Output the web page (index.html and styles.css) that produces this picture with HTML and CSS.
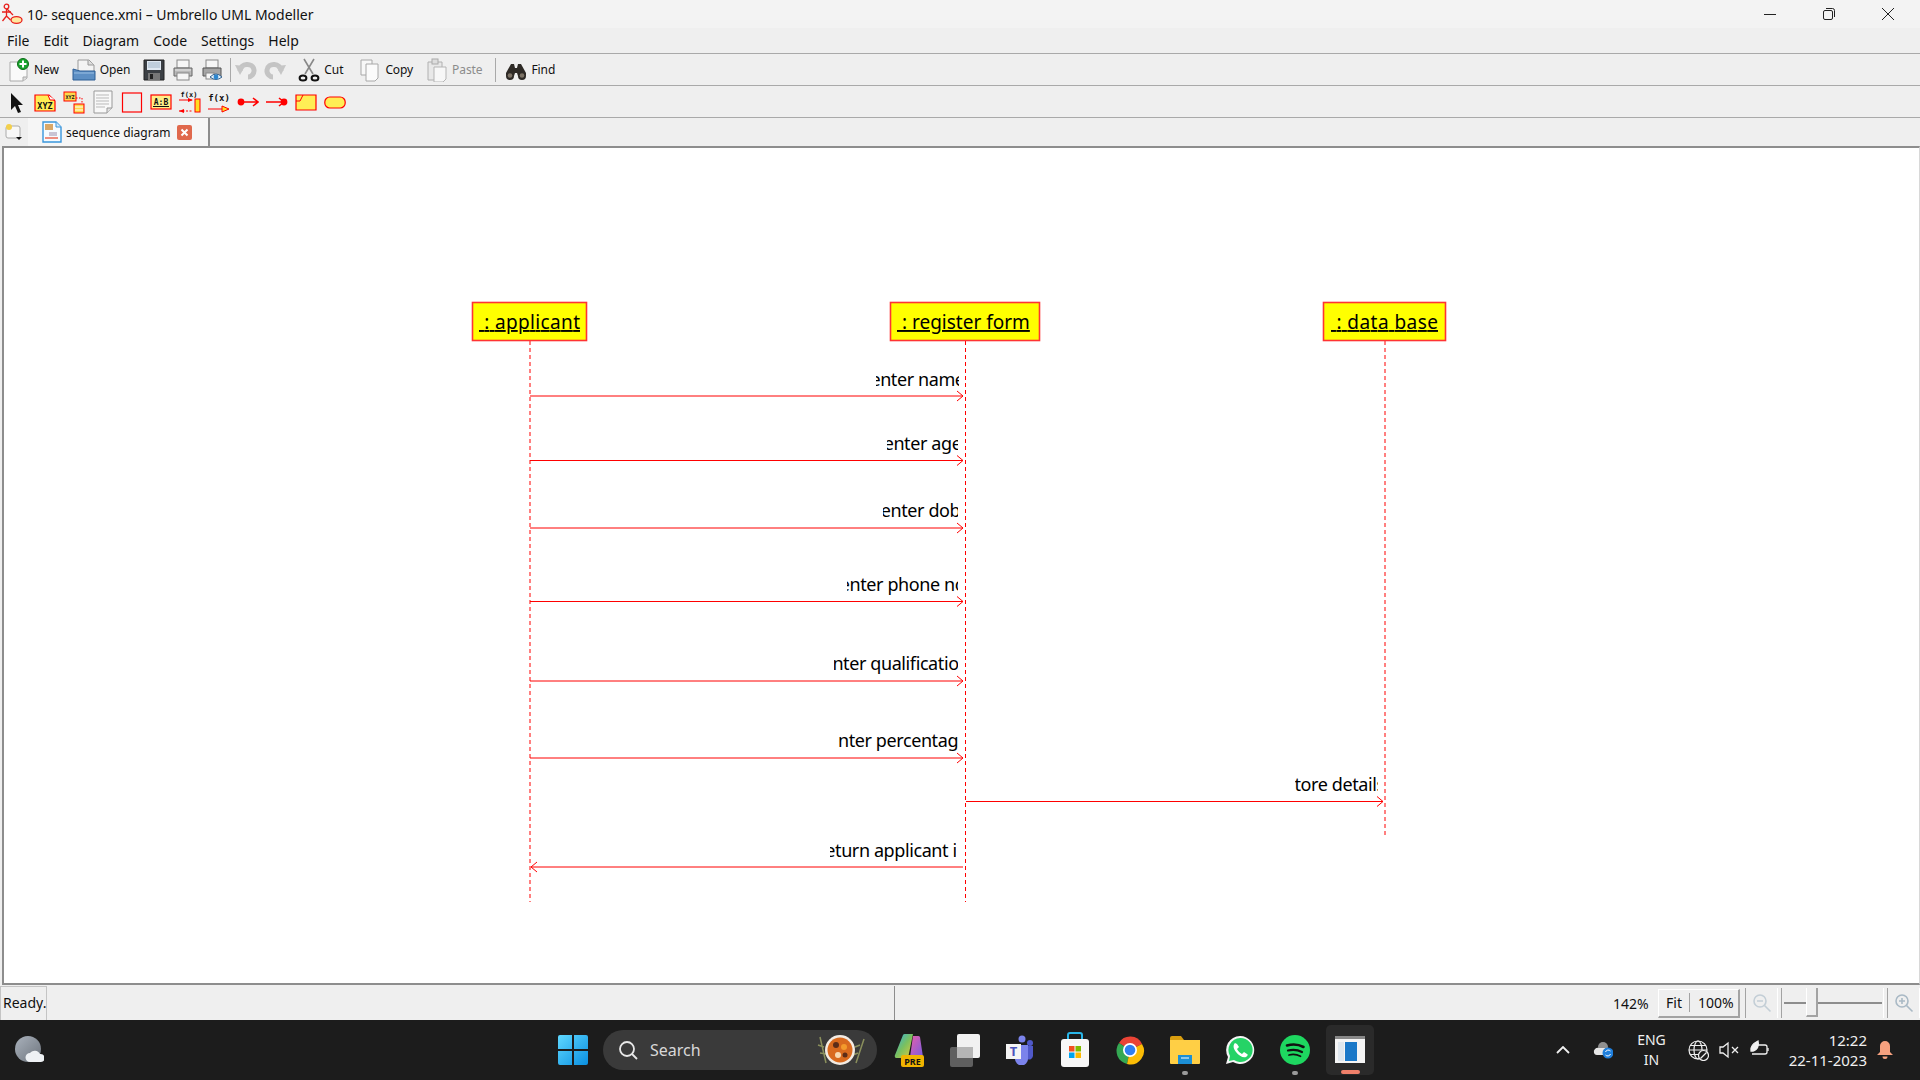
FILE: index.html
```html
<!DOCTYPE html>
<html lang="en">
<head>
  <meta charset="UTF-8" />
  <title>10- sequence.xmi – Umbrello UML Modeller</title>
  <link rel="stylesheet" href="styles.css">
</head>
<body>
  <header class="titlebar">
    <svg class="app-icon" width="22" height="22" viewBox="0 0 22 22" fill="none" stroke="#e8211d" stroke-width="1.3">
      <circle cx="5.5" cy="3.5" r="2.3"/><path d="M5.5 6v7M1 9h9M5.5 13l-4 5M5.5 13l4 4"/>
      <path d="M6 6l6 6"/><ellipse cx="15.5" cy="17" rx="5.5" ry="3.3" fill="#ffe9a0"/>
    </svg>
    <span class="app-title">10- sequence.xmi – Umbrello UML Modeller</span>
    <div class="win-buttons">
      <svg width="14" height="14" viewBox="0 0 14 14" stroke="#222" fill="none"><path d="M1 7.5h12"/></svg>
      <svg width="14" height="14" viewBox="0 0 14 14" stroke="#222" fill="none"><rect x="1.5" y="3.5" width="9" height="9" rx="1.5"/><path d="M4 1.5h6.5a2 2 0 0 1 2 2V10"/></svg>
      <svg width="14" height="14" viewBox="0 0 14 14" stroke="#222" fill="none"><path d="M1 1l12 12M13 1L1 13"/></svg>
    </div>
  </header>

  <nav class="menubar">
    <span>File</span><span>Edit</span><span>Diagram</span><span>Code</span><span>Settings</span><span>Help</span>
  </nav>

  <div class="toolbar">
    <div class="tool tool-text">
      <svg width="22" height="24" viewBox="0 0 22 24"><path d="M2 4h12l5 5v11l-4 3H2z" fill="#fafafa" stroke="#aaa"/><path d="M15 23v-4h4" fill="#ddd" stroke="#aaa"/><circle cx="15" cy="6" r="5.5" fill="#18a32c" stroke="#0c6d18"/><path d="M15 2.5v7M11.5 6h7" stroke="#fff" stroke-width="2"/></svg>
      <span>New</span>
    </div>
    <div class="tool tool-text">
      <svg width="24" height="24" viewBox="0 0 24 24"><path d="M6 2h11l5 5v8H6z" fill="#f4f4f4" stroke="#999"/><path d="M16 2v5h6" fill="#ddd" stroke="#999"/><path d="M1 11l7 2h15v9H1z" fill="#5d8fc4" stroke="#2f5f95"/><path d="M2 15h20" stroke="#9cc0e4"/></svg>
      <span>Open</span>
    </div>
    <div class="tool">
      <svg width="22" height="24" viewBox="0 0 22 24"><path d="M1 2h20v20H1z" fill="#3b3f44" stroke="#222"/><rect x="4" y="3" width="14" height="9" fill="#dfe8f2"/><path d="M5 5h12M5 7h12M5 9h12" stroke="#9fb4c8"/><rect x="5" y="15" width="12" height="7" fill="#777"/><rect x="7" y="16" width="3" height="5" fill="#222"/></svg>
    </div>
    <div class="tool">
      <svg width="22" height="24" viewBox="0 0 22 24"><rect x="5" y="2" width="12" height="8" fill="#f6f6f6" stroke="#888"/><path d="M2 10h18v8H2z" fill="#b9b9b9" stroke="#666"/><rect x="5" y="15" width="12" height="7" fill="#f6f6f6" stroke="#888"/><path d="M3 12h16" stroke="#e8e8e8"/></svg>
    </div>
    <div class="tool">
      <svg width="22" height="24" viewBox="0 0 22 24"><rect x="5" y="2" width="12" height="8" fill="#f6f6f6" stroke="#888"/><path d="M2 10h18v8H2z" fill="#a5a5a5" stroke="#555"/><rect x="5" y="15" width="8" height="6" fill="#f6f6f6" stroke="#888"/><path d="M9 19q6-6 12 0q-6 5-12 0z" fill="#dff0fb" stroke="#33618f"/><circle cx="15" cy="19" r="2.4" fill="#2c86cf"/></svg>
    </div>
    <div class="tool-sep"></div>
    <div class="tool">
      <svg width="22" height="24" viewBox="0 0 22 24" fill="none"><path d="M5 13C5 5 18 4 19 12c.5 4-3 7-6 7" stroke="#c4c4c4" stroke-width="5"/><path d="M0 7l10 1-5 9z" fill="#c6c6c6"/></svg>
    </div>
    <div class="tool">
      <svg width="22" height="24" viewBox="0 0 22 24" fill="none"><path d="M17 13C17 5 4 4 3 12c-.5 4 3 7 6 7" stroke="#c4c4c4" stroke-width="5"/><path d="M22 7l-10 1 5 9z" fill="#c6c6c6"/></svg>
    </div>
    <div class="tool tool-text tool-cut">
      <svg width="22" height="24" viewBox="0 0 22 24" fill="none"><path d="M6 1l9 15M16 1L7 16" stroke="#888" stroke-width="1.6"/><ellipse cx="5" cy="20" rx="3.4" ry="2.6" stroke="#111" stroke-width="2"/><ellipse cx="17" cy="20" rx="3.4" ry="2.6" stroke="#111" stroke-width="2"/></svg>
      <span>Cut</span>
    </div>
    <div class="tool tool-text">
      <svg width="22" height="24" viewBox="0 0 22 24"><path d="M2 2h11v15H2z" fill="#f8f8f8" stroke="#a8a8a8"/><path d="M7 6h12v14l-3 3H7z" fill="#fbfbfb" stroke="#a8a8a8"/></svg>
      <span>Copy</span>
    </div>
    <div class="tool tool-text tool-off">
      <svg width="22" height="24" viewBox="0 0 22 24"><path d="M2 4h14v18H2z" fill="#e8e8e8" stroke="#b0b0b0"/><rect x="6" y="1" width="6" height="5" fill="#ddd" stroke="#aaa"/><path d="M8 9h12v12l-3 3H8z" fill="#f7f7f7" stroke="#b5b5b5"/></svg>
      <span>Paste</span>
    </div>
    <div class="tool-sep tool-sep-find"></div>
    <div class="tool tool-text">
      <svg width="22" height="24" viewBox="0 0 22 24"><path d="M6 6h3l1 4h2l1-4h3l5 9v3a4 4 0 0 1-8 0l-1-3h-2l-1 3a4 4 0 0 1-8 0v-3z" fill="#2e2a26"/><circle cx="5" cy="17.5" r="2.3" fill="#7d7366"/><circle cx="17" cy="17.5" r="2.3" fill="#7d7366"/></svg>
      <span>Find</span>
    </div>
  </div>

  <div class="toolbar toolbar-uml">
    <div class="tool">
      <svg width="22" height="24" viewBox="0 0 22 24"><path d="M6 3v17l4-4 3 7 3-1-3-7h5z" fill="#111"/></svg>
    </div>
    <div class="tool">
      <svg width="22" height="24" viewBox="0 0 22 24"><path d="M1 5h14l6 6v10H1z" fill="#ffee55" stroke="#f00" stroke-width="1.2"/><path d="M14 5l2 5h5" fill="#fff" stroke="#f00"/><text class="icon-text" x="11" y="19" font-size="8.5" text-anchor="middle">XYZ</text></svg>
    </div>
    <div class="tool">
      <svg width="22" height="24" viewBox="0 0 22 24"><rect x="1" y="2" width="12" height="9" fill="#fdd84d" stroke="#f00"/><text class="icon-text" x="7" y="9" font-size="5" text-anchor="middle">XYZ</text><path d="M13 8h6v6" fill="none" stroke="#f00" stroke-dasharray="1.5 1.5"/><rect x="11" y="14" width="10" height="9" fill="#fdd84d" stroke="#f00"/><path d="M12 17h8M12 20h8" stroke="#fff"/></svg>
    </div>
    <div class="tool">
      <svg width="22" height="24" viewBox="0 0 22 24"><path d="M2 1h18v17l-5 5H2z" fill="#f8f8f8" stroke="#999"/><path d="M4 5h13M4 8h13M4 11h13M4 14h13M4 17h9" stroke="#b9b9b9"/><path d="M15 23v-5h5" fill="#e0e0e0" stroke="#999"/></svg>
    </div>
    <div class="tool">
      <svg width="22" height="24" viewBox="0 0 22 24"><rect x="1.5" y="3" width="19" height="19" fill="none" stroke="#f00" stroke-width="1.2"/></svg>
    </div>
    <div class="tool">
      <svg width="22" height="24" viewBox="0 0 22 24"><rect x="1" y="5" width="20" height="14" fill="#ffee88" stroke="#f00" stroke-width="1.2"/><text class="icon-text" x="11" y="14.5" font-size="8" text-anchor="middle">A:B</text><path d="M3 16.500h16" stroke="#111"/></svg>
    </div>
    <div class="tool">
      <svg width="22" height="24" viewBox="0 0 22 24"><text class="icon-text" x="10" y="7" font-size="7" text-anchor="middle">f(x)</text><path d="M0 10h13" stroke="#f00"/><path d="M0 21h13" stroke="#f00" stroke-dasharray="2 1.500"/><path d="M9 8l5 2-5 2zM5 19l-5 2 5 2z" fill="#f00"/><rect x="16" y="9" width="5" height="13" fill="#ffdd22" stroke="#f00"/></svg>
    </div>
    <div class="tool">
      <svg width="22" height="24" viewBox="0 0 22 24"><text class="icon-text" x="11" y="11" font-size="9" text-anchor="middle">f(x)</text><path d="M0 19h14" stroke="#f00"/><path d="M14 16l7 3-7 3z" fill="#ffdd22" stroke="#f00"/></svg>
    </div>
    <div class="tool">
      <svg width="22" height="24" viewBox="0 0 22 24" fill="none" stroke="#f00" stroke-width="1.6"><circle cx="4" cy="12" r="2.6" fill="#f00"/><path d="M4 12h17M16 8l5 4-5 4"/></svg>
    </div>
    <div class="tool">
      <svg width="22" height="24" viewBox="0 0 22 24" fill="none" stroke="#f00" stroke-width="1.6"><circle cx="18" cy="12" r="2.6" fill="#f00"/><path d="M0 12h18M13 8l5 4-5 4"/></svg>
    </div>
    <div class="tool">
      <svg width="22" height="24" viewBox="0 0 22 24"><path d="M1 5h20v15H1z" fill="#ffee55" stroke="#f00" stroke-width="1.2"/><path d="M1 11h4l3-6" fill="none" stroke="#f00"/></svg>
    </div>
    <div class="tool">
      <svg width="22" height="24" viewBox="0 0 22 24"><rect x="0.8" y="7" width="20.4" height="11" rx="5" fill="#ffee55" stroke="#f00" stroke-width="1.2"/></svg>
    </div>
  </div>

  <div class="tabrow">
    <svg class="new-tab" width="18" height="18" viewBox="0 0 18 18"><rect x="1" y="3" width="14" height="12" rx="2" fill="#f8f8f8" stroke="#aaa"/><circle cx="4" cy="4" r="3" fill="#f3d04c"/><path d="M11 14h6l-3 3z" fill="#111"/></svg>
    <div class="tab">
      <svg width="20" height="22" viewBox="0 0 20 22"><path d="M1 1h13l5 5v15H1z" fill="#f6fbff" stroke="#3a96dc" stroke-width="1.4"/><path d="M14 1v5h5" fill="#cfe6f8" stroke="#3a96dc"/><rect x="3" y="3" width="8" height="6" fill="#d9a868"/><rect x="7" y="11" width="8" height="4" fill="#c9c4d4"/><path d="M3 17h13" stroke="#ee8e80" stroke-width="2"/></svg>
      <span>sequence diagram</span>
      <svg width="15" height="15" viewBox="0 0 15 15"><rect width="15" height="15" rx="2" fill="#e0694d"/><path d="M4.5 4.5l6 6M10.5 4.5l-6 6" stroke="#fff" stroke-width="2"/></svg>
    </div>
  </div>

  <main class="canvas">
    <svg class="diagram" width="1915" height="835" viewBox="4 148 1915 835">
      <g class="lifeline">
        <path d="M530 341V902"/>
        <path d="M965.5 341V902"/>
        <path d="M1385 341V836"/>
      </g>

      <g class="object">
        <rect x="472.5" y="302.5" width="114" height="38"/>
        <rect x="890.5" y="302.5" width="149" height="38"/>
        <rect x="1323.5" y="302.5" width="122" height="38"/>
      </g>
      <text class="object-name" x="479" y="329" textLength="101" xml:space="preserve"> : applicant</text>
      <text class="object-name" x="897" y="329" xml:space="preserve"> : register form</text>
      <text class="object-name" x="1331" y="329" textLength="107" xml:space="preserve"> : data base</text>

      <g class="message">
        <path d="M530 396H963M957 391l6 5-6 5"/>
        <path d="M530 460.5H963M957 455.5l6 5-6 5"/>
        <path d="M530 528H963M957 523l6 5-6 5"/>
        <path d="M530 601.5H963M957 596.5l6 5-6 5"/>
        <path d="M530 681H963M957 676l6 5-6 5"/>
        <path d="M530 758H963M957 753l6 5-6 5"/>
        <path d="M966 801.5H1383M1377 796.5l6 5-6 5"/>
        <path d="M963 867H531M537 862l-6 5 6 5"/>
      </g>

      <svg x="876" y="365" width="83" height="28"><text class="label" x="41.5" y="21">enter name</text></svg>
      <svg x="887" y="429" width="71" height="28"><text class="label" x="35.5" y="21">enter age</text></svg>
      <svg x="883" y="496" width="75" height="28"><text class="label" x="37.5" y="21">enter dob</text></svg>
      <svg x="847" y="570" width="111" height="28"><text class="label" x="55.5" y="21">enter phone no</text></svg>
      <svg x="834" y="649" width="124" height="28"><text class="label" x="62" y="21">enter qualification</text></svg>
      <svg x="838" y="726" width="120" height="28"><text class="label" x="60" y="21">enter percentage</text></svg>
      <svg x="1295" y="770" width="83" height="28"><text class="label" x="40.5" y="21">store details</text></svg>
      <svg x="830" y="836" width="126" height="28"><text class="label" x="63" y="21">return applicant id</text></svg>
    </svg>
  </main>

  <footer class="statusbar">
    <div class="status-ready">Ready.</div>
    <div class="status-fill"></div>
    <div class="status-zoom">
      <span class="zoom-value">142%</span>
      <div class="zoom-buttons"><span>Fit</span><span class="zoom-full">100%</span></div>
      <div class="zoom-frame zoom-icon">
        <svg width="20" height="20" viewBox="0 0 20 20" fill="none" stroke="#c3ced6" stroke-width="1.6"><circle cx="8" cy="8" r="6"/><path d="M5 8h6M12.5 12.5l6 6" /></svg>
      </div>
      <div class="zoom-frame zoom-slider"><div class="slider-handle"></div></div>
      <div class="zoom-frame zoom-icon">
        <svg width="20" height="20" viewBox="0 0 20 20" fill="none" stroke="#a9b9c5" stroke-width="1.6"><circle cx="8" cy="8" r="6"/><path d="M5 8h6M8 5v6M12.5 12.5l6 6"/></svg>
      </div>
    </div>
  </footer>

  <div class="taskbar">
    <svg class="weather" width="30" height="30" viewBox="0 0 30 30"><defs><linearGradient id="moon" x1="0" y1="0" x2="1" y2="1"><stop offset="0" stop-color="#aab2bc"/><stop offset="1" stop-color="#6d747d"/></linearGradient></defs><circle cx="14" cy="14" r="13" fill="url(#moon)"/><path d="M16 27a4.500 4.500 0 0 1 0-9 6 6 0 0 1 10 1 4 4 0 0 1 1 8z" fill="#eef1f4"/></svg>

    <div class="task-center">
      <svg class="start-logo" width="30" height="30" viewBox="0 0 30 30"><defs><linearGradient id="win" x1="0" y1="0" x2="1" y2="1"><stop offset="0" stop-color="#5fd8ff"/><stop offset="1" stop-color="#0a8fe0"/></linearGradient></defs><path d="M0 2a2 2 0 0 1 2-2h12v14H0zM16 0h12a2 2 0 0 1 2 2v12H16zM0 16h14v14H2a2 2 0 0 1-2-2zM16 16h14v12a2 2 0 0 1-2 2H16z" fill="url(#win)"/></svg>

      <div class="searchbox">
        <svg width="22" height="22" viewBox="0 0 22 22" fill="none" stroke="#e8e8e8" stroke-width="1.8"><circle cx="10" cy="10" r="7"/><path d="M15 15l5 5"/></svg>
        <span>Search</span>
        <svg class="search-art" width="60" height="34" viewBox="0 0 60 34"><path d="M10 4l6 26M46 30l8-24M8 12l6 2M10 20l6 1M50 12l-5 2M48 20l-5 2" stroke="#8a8f5c" stroke-width="1.5" fill="none"/><circle cx="30" cy="17" r="15" fill="#f3ece4"/><circle cx="30" cy="17" r="12.500" fill="#d96a1e"/><circle cx="26" cy="12" r="3" fill="#5c2c18"/><circle cx="34" cy="14" r="3" fill="#f39a2c"/><circle cx="28" cy="22" r="3" fill="#f8d9b0"/><circle cx="35" cy="22" r="2.500" fill="#5c2c18"/></svg>
      </div>

      <div class="task-slot">
        <svg width="32" height="34" viewBox="0 0 32 34"><defs><linearGradient id="cop" x1="0" y1="0" x2="1" y2="1"><stop offset="0" stop-color="#2fb0e8"/><stop offset=".5" stop-color="#79c060"/><stop offset="1" stop-color="#e8c93a"/></linearGradient><linearGradient id="cop2" x1="0" y1="0" x2="1" y2="1"><stop offset="0" stop-color="#e75fa8"/><stop offset="1" stop-color="#7a5ce0"/></linearGradient></defs><path d="M9 2a2 2 0 0 1 2-1h8l-5 24H3a2 2 0 0 1-2-3z" fill="url(#cop)"/><path d="M19 3h5a2 2 0 0 1 2 1l3 20h-13z" fill="url(#cop2)"/><rect x="7" y="22" width="23" height="12" rx="2" fill="#f1b400"/><text class="pre-text" x="18.500" y="31.500" text-anchor="middle">PRE</text></svg>
      </div>
      <div class="task-slot">
        <svg width="30" height="34" viewBox="0 0 30 34"><rect x="0" y="14" width="23" height="20" rx="2" fill="#5f5f5f"/><rect x="7" y="1" width="23" height="24" rx="2" fill="#f1f1f1"/><rect x="7" y="14" width="16" height="11" fill="#b5b5b5"/></svg>
      </div>
      <div class="task-slot">
        <svg width="28" height="30" viewBox="0 0 28 30"><circle cx="16" cy="4" r="3.500" fill="#7b83eb"/><circle cx="24" cy="8" r="3" fill="#5059c9"/><path d="M20 11h7v10a4 4 0 0 1-6 3z" fill="#5059c9"/><path d="M9 10h13v14a6 6 0 0 1-13 0z" fill="#7b83eb"/><rect x="0" y="9" width="15" height="15" fill="#f4f4f4"/><text class="teams-text" x="7.500" y="21" text-anchor="middle">T</text></svg>
      </div>
      <div class="task-slot">
        <svg width="30" height="36" viewBox="0 0 30 36"><path d="M8 7V3a2 2 0 0 1 2-2h10a2 2 0 0 1 2 2v4" fill="none" stroke="#29b6e8" stroke-width="2"/><rect x="1" y="7" width="28" height="28" rx="3" fill="#f8f8f8"/><rect x="9" y="14" width="5.500" height="5.500" fill="#f25022"/><rect x="15.500" y="14" width="5.500" height="5.500" fill="#7fba00"/><rect x="9" y="20.500" width="5.500" height="5.500" fill="#00a4ef"/><rect x="15.500" y="20.500" width="5.500" height="5.500" fill="#ffb900"/></svg>
      </div>
      <div class="task-slot">
        <svg width="30" height="30" viewBox="0 0 30 30"><path d="M15 15L4 8A13 13 0 0 1 27 9z" fill="#ea4335"/><path d="M15 15L4 8A13.500 13.500 0 0 0 12 29z" fill="#34a853"/><path d="M15 15L27 9A13.500 13.500 0 0 1 12 29z" fill="#fbbc05"/><circle cx="15" cy="15" r="7" fill="#fff"/><circle cx="15" cy="15" r="5.300" fill="#2f7ff0"/></svg>
      </div>
      <div class="task-slot task-open">
        <svg width="32" height="30" viewBox="0 0 32 30"><path d="M1 3a2 2 0 0 1 2-2h9l3 4H1z" fill="#d99e0f"/><path d="M1 5h30v23a1 1 0 0 1-1 1H2a1 1 0 0 1-1-1z" fill="#ffcf45"/><path d="M9 20h14v9H9z" fill="#1c8fd6"/><path d="M12 23h8" stroke="#fff"/></svg>
      </div>
      <div class="task-slot">
        <svg width="30" height="30" viewBox="0 0 30 30"><path d="M15 1a14 14 0 0 0-12 21L1 29l7-2A14 14 0 1 0 15 1z" fill="#f5f5f5"/><path d="M15 3a12 12 0 0 0-10 18l-1 5 5-1A12 12 0 1 0 15 3z" fill="#25d366"/><path d="M10 8c-2 2-2 5 1 9s7 6 10 5c2-1 2-3 1-3l-3-2-2 2c-2-1-4-3-5-5l2-2-2-3z" fill="#fff"/></svg>
      </div>
      <div class="task-slot task-open">
        <svg width="30" height="30" viewBox="0 0 30 30" fill="none" stroke="#111" stroke-linecap="round"><circle cx="15" cy="15" r="15" fill="#1ed760" stroke="none"/><path d="M7 10.500q9-2.500 16.500 1.500" stroke-width="2.600"/><path d="M8 15.500q7.500-2 14 1.500" stroke-width="2.200"/><path d="M9 20q6-1.500 11.500 1.200" stroke-width="1.800"/></svg>
      </div>
      <div class="task-slot">
        <div class="active-app">
          <svg width="30" height="30" viewBox="0 0 30 30"><rect x="0" y="1" width="30" height="27" fill="#f5f5f5"/><rect y="1" width="30" height="3" fill="#888"/><rect x="10" y="7" width="12" height="19" fill="#1a78c8"/><rect x="3" y="7" width="6" height="19" fill="#dfe7ee"/></svg>
        </div>
      </div>
    </div>

    <div class="tray">
      <svg class="tray-chevron" width="14" height="8" viewBox="0 0 14 8" fill="none" stroke="#f0f0f0" stroke-width="1.8"><path d="M1 7l6-6 6 6"/></svg>
      <svg class="tray-cloud" width="20" height="18" viewBox="0 0 20 18"><circle cx="10" cy="6" r="5" fill="#8f8f8f"/><path d="M1 12a4 4 0 0 1 5-5h6v7H4a3 3 0 0 1-3-2z" fill="#e6e6e6"/><circle cx="15" cy="12" r="5.500" fill="#1f7fdc"/><path d="M12.500 11a3 3 0 0 1 5-1M17.500 13a3 3 0 0 1-5 1" stroke="#fff" fill="none"/></svg>
      <div class="tray-lang"><span>ENG</span><span>IN</span></div>
      <svg class="tray-icon" width="21" height="21" viewBox="0 0 21 21" fill="none" stroke="#f0f0f0" stroke-width="1.2"><circle cx="10" cy="10" r="9"/><ellipse cx="10" cy="10" rx="4" ry="9"/><path d="M1 10h18M2 5.500h16M2 14.500h16"/><circle cx="15.500" cy="15.500" r="5" fill="#1c1c1c"/><path d="M12.500 18.500l6-6"/></svg>
      <svg class="tray-icon" width="20" height="20" viewBox="0 0 20 20" fill="none" stroke="#f0f0f0" stroke-width="1.3"><path d="M1 7h3l5-4v14l-5-4H1z"/><path d="M13 7l6 6M19 7l-6 6"/></svg>
      <svg class="tray-icon" width="20" height="20" viewBox="0 0 20 20" fill="none" stroke="#f0f0f0" stroke-width="1.3"><path d="M6 5h10a2 2 0 0 1 2 2v5a2 2 0 0 1-2 2H3"/><path d="M19 8v3"/><path d="M2 11C1 6 5 3 9 1c1 4 0 9-5 10z" fill="#f0f0f0"/></svg>
      <div class="tray-clock"><span>12:22</span><span>22-11-2023</span></div>
      <svg class="tray-bell" width="16" height="20" viewBox="0 0 16 20"><path d="M8 1a5 5 0 0 1 5 5v6l3 3H0l3-3V6a5 5 0 0 1 5-5z" fill="#f6a17f"/><path d="M5.500 16.500h5a2.500 2.500 0 0 1-5 0z" fill="#f6a17f"/></svg>
    </div>
  </div>
</body>
</html>
```

FILE: styles.css
```css
html, body {
  margin: 0;
  padding: 0;
  width: 1920px;
  height: 1080px;
  overflow: hidden;
  background: #efefef;
  font-family: "Noto Sans", sans-serif;
  color: #111;
}

body {
  display: flex;
  flex-direction: column;
}

svg {
  display: block;
  flex: none;
}

/* window title */
.titlebar {
  height: 28px;
  display: flex;
  align-items: center;
  background: #f3f3f3;
  padding-left: 1px;
  font-size: 14px;
}
.app-title {
  margin-left: 4px;
}
.win-buttons {
  margin-left: auto;
  display: flex;
  gap: 45px;
  padding-right: 25px;
}

/* menu */
.menubar {
  height: 25px;
  display: flex;
  align-items: center;
  gap: 14px;
  padding-left: 7px;
  border-bottom: 1px solid #a9a9a9;
  font-size: 14px;
}

/* toolbars */
.toolbar {
  height: 31px;
  display: flex;
  align-items: center;
  padding-left: 8px;
  border-bottom: 1px solid #a9a9a9;
  font-size: 12px;
}
.toolbar-uml {
  padding-left: 5px;
}
.tool {
  display: flex;
  align-items: center;
  gap: 4px;
  margin-right: 7px;
}
.tool span {
  letter-spacing: -0.1px;
}
.tool-text {
  margin-right: 13px;
}
.tool-cut {
  margin-left: 5px;
  margin-right: 16px;
}
.tool-off {
  color: #8c8c8c;
}
.tool-sep {
  width: 1px;
  height: 24px;
  background: #a9a9a9;
  margin-right: 4px;
}
.tool-sep-find {
  margin-right: 9px;
}
.icon-text {
  font-family: "DejaVu Sans Mono", monospace;
  font-weight: bold;
  fill: #111;
}

/* tabs */
.tabrow {
  height: 28px;
  display: flex;
  align-items: center;
  padding-left: 5px;
  font-size: 12px;
  flex: none;
}
.tab {
  height: 28px;
  width: 182px;
  margin-left: 5px;
  padding-left: 14px;
  box-sizing: border-box;
  display: flex;
  align-items: center;
  gap: 4px;
  background: #f6f6f6;
  border-right: 2px solid #8d8d8d;
}
.tab span {
  width: 107px;
}

/* diagram */
.canvas {
  flex: 1;
  min-height: 0;
  background: #fff;
  border-top: 2px solid #8d8d8d;
  border-left: 2px solid #8d8d8d;
  border-bottom: 2px solid #8d8d8d;
  border-right: 1px solid #d8d8d8;
  margin-left: 2px;
}
.lifeline path {
  fill: none;
  stroke: #f00;
  stroke-dasharray: 4 3;
}
.object rect {
  fill: #ff0;
  stroke: #f33;
  stroke-width: 1.6;
}
.object-name {
  font-size: 19px;
  text-decoration: underline;
  white-space: pre;
  fill: #000;
}
.message path {
  fill: none;
  stroke: #f00;
}
.label {
  font-size: 18px;
  letter-spacing: -0.4px;
  text-anchor: middle;
  fill: #000;
}

/* status bar */
.statusbar {
  height: 35px;
  flex: none;
  display: flex;
  font-size: 14px;
  box-sizing: border-box;
  padding-top: 1px;
  background: #efefef;
}
.status-ready {
  width: 47px;
  padding-left: 2px;
  box-sizing: border-box;
  line-height: 32px;
  border: 1px solid #c4c4c4;
  border-width: 1px 1px 0 1px;
  white-space: nowrap;
}
.status-fill {
  width: 848px;
}
.status-zoom {
  flex: 1;
  display: flex;
  align-items: center;
  border-left: 1px solid #8d8d8d;
  padding-left: 718px;
}
.zoom-value {
  width: 45px;
}
.zoom-buttons {
  width: 82px;
  height: 29px;
  box-sizing: border-box;
  padding-left: 7px;
  display: flex;
  align-items: center;
  border-bottom: 2px solid #a3a3a3;
  border-right: 2px solid #a3a3a3;
  border-top: 1px solid #fff;
  border-left: 1px solid #fff;
  margin-right: 5px;
}
.zoom-full {
  border-left: 1px solid #a3a3a3;
  margin-left: 7px;
  padding-left: 8px;
}
.zoom-frame {
  height: 30px;
  box-sizing: border-box;
  display: flex;
  align-items: center;
  justify-content: center;
  border-left: 1px solid #a3a3a3;
  border-right: 1px solid #fff;
}
.zoom-icon {
  width: 33px;
}
.zoom-slider {
  width: 103px;
  margin: 0 3px;
  position: relative;
}
.zoom-slider::before {
  content: "";
  width: 98px;
  height: 2px;
  background: #8d8d8d;
}
.slider-handle {
  position: absolute;
  left: 24px;
  top: 0;
  width: 12px;
  height: 29px;
  box-sizing: border-box;
  background: #efefef;
  border-right: 2px solid #a3a3a3;
  border-bottom: 2px solid #a3a3a3;
  border-left: 1px solid #fff;
}

/* windows taskbar */
.taskbar {
  height: 60px;
  flex: none;
  display: flex;
  align-items: center;
  background: #1c1c1c;
  color: #f0f0f0;
  position: relative;
}
.weather {
  margin-left: 14px;
}
.task-center {
  position: absolute;
  left: 558px;
  top: 0;
  height: 60px;
  display: flex;
  align-items: center;
}
.start-logo {
  margin-right: 15px;
}
.searchbox {
  width: 274px;
  height: 40px;
  box-sizing: border-box;
  padding-left: 14px;
  display: flex;
  align-items: center;
  gap: 11px;
  background: #3a3a3a;
  border-radius: 20px;
  font-size: 16px;
  margin-right: 5px;
  color: #d8d8d8;
  position: relative;
}
.search-art {
  position: absolute;
  right: 7px;
  top: 3px;
}
.task-slot {
  width: 55px;
  height: 60px;
  display: flex;
  align-items: center;
  justify-content: center;
  position: relative;
}
.task-open::after {
  content: "";
  position: absolute;
  left: 25px;
  bottom: 5px;
  width: 6px;
  height: 4px;
  border-radius: 2px;
  background: #9a9a9a;
}
.pre-text {
  font-size: 9px;
  font-weight: bold;
  fill: #111;
}
.teams-text {
  font-size: 13px;
  font-weight: bold;
  fill: #4b53bc;
}
.active-app {
  width: 48px;
  height: 50px;
  display: flex;
  align-items: center;
  justify-content: center;
  background: #2a2a2a;
  border-radius: 5px;
  position: relative;
}
.active-app::after {
  content: "";
  position: absolute;
  left: 15px;
  bottom: 1px;
  width: 19px;
  height: 4px;
  border-radius: 2px;
  background: #f0806a;
}
.tray {
  position: absolute;
  left: 1556px;
  top: 0;
  height: 60px;
  display: flex;
  align-items: center;
}
.tray-chevron {
  margin-right: 23px;
}
.tray-cloud {
  margin-right: 24px;
}
.tray-lang {
  width: 29px;
  display: flex;
  flex-direction: column;
  align-items: center;
  font-size: 14px;
  line-height: 20px;
  margin-right: 22px;
}
.tray-icon {
  margin-right: 10px;
}
.tray-clock {
  width: 88px;
  display: flex;
  flex-direction: column;
  align-items: flex-end;
  font-size: 15px;
  line-height: 20px;
  margin-right: 10px;
}
```
